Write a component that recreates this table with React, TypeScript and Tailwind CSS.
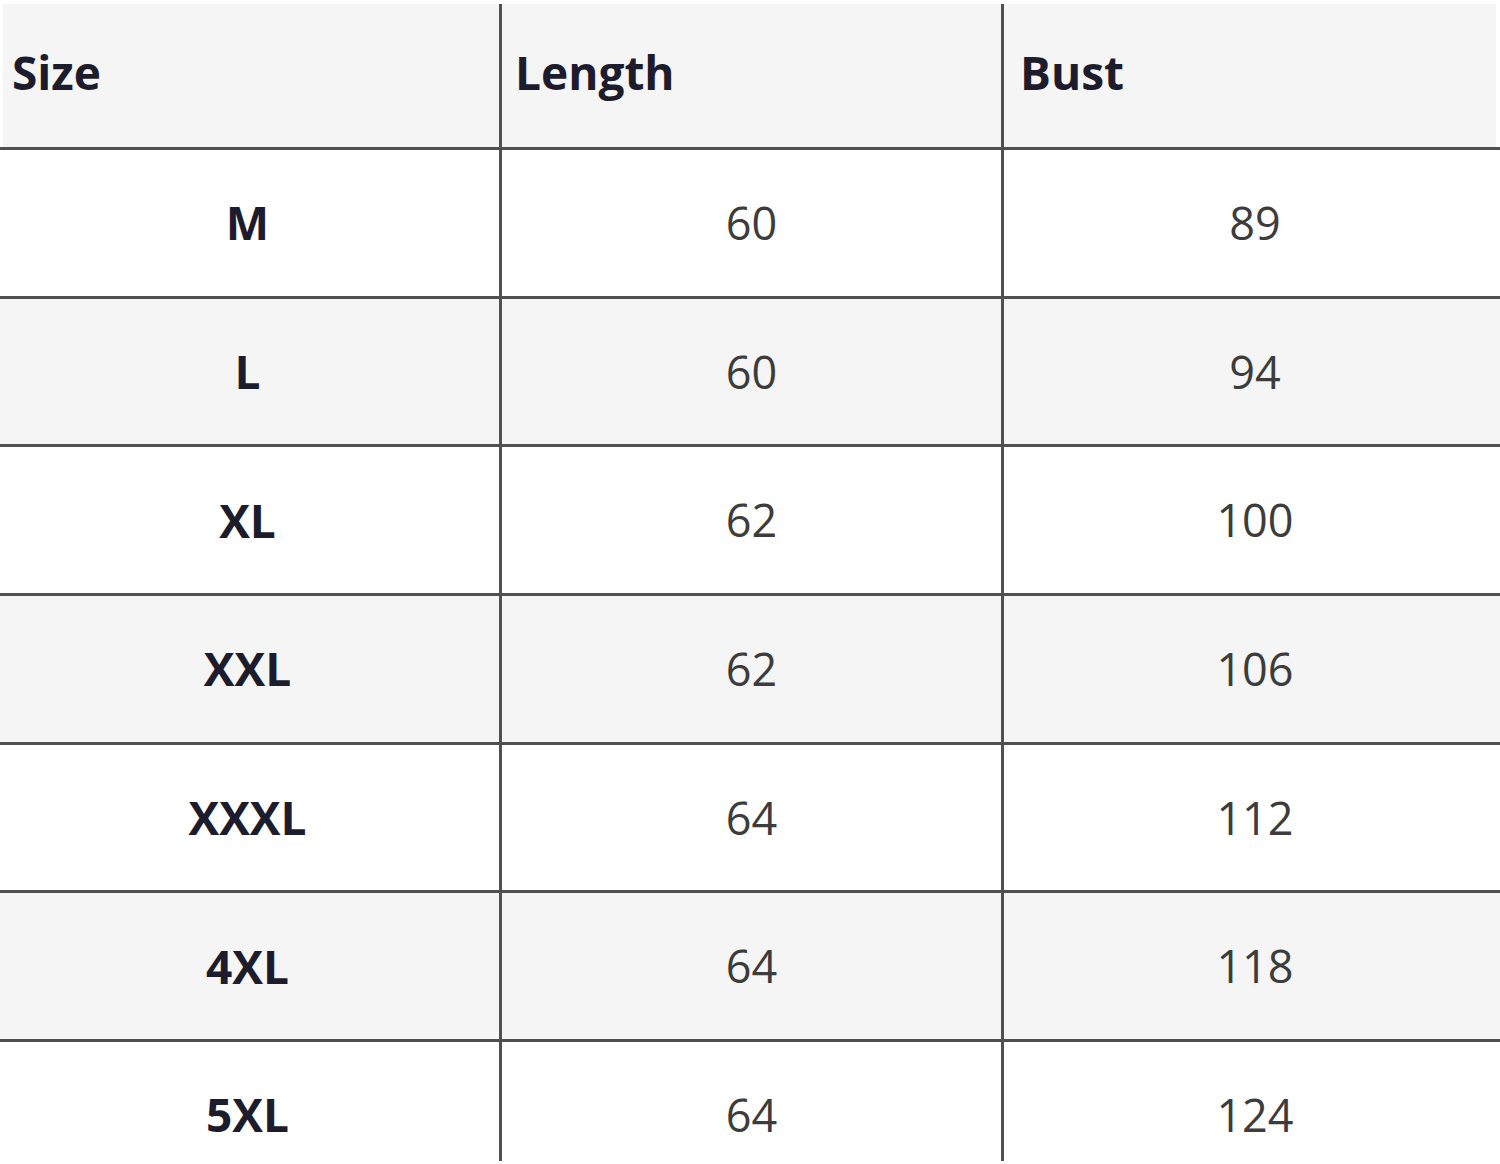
import React from "react";

const rows: [string, string, string][] = [
  ["M", "60", "89"],
  ["L", "60", "94"],
  ["XL", "62", "100"],
  ["XXL", "62", "106"],
  ["XXXL", "64", "112"],
  ["4XL", "64", "118"],
  ["5XL", "64", "124"],
];

const font = { fontFamily: '"Open Sans", "Noto Sans", sans-serif' };

export default function App() {
  return (
    <div className="w-[1500px] h-[1164px] bg-white overflow-hidden" style={font}>
      {/* header */}
      <div className="flex h-[150px] pt-[4px] border-b-[3px] border-[#505050]">
        <div className="w-[502px] pl-[3px] border-r-[3px] border-[#505050] flex">
          <div className="flex-1 bg-[#f5f5f5] flex items-center pl-[9px] pb-[6px] text-[46px] font-bold text-[#1c1c2c]">
            Size
          </div>
        </div>
        <div className="w-[502px] border-r-[3px] border-[#505050] flex">
          <div className="flex-1 bg-[#f5f5f5] flex items-center pl-[13px] pb-[6px] text-[46px] font-bold text-[#1c1c2c]">
            Length
          </div>
        </div>
        <div className="w-[496px] pr-[4px] flex">
          <div className="flex-1 bg-[#f5f5f5] flex items-center pl-[16px] pb-[6px] text-[46px] font-bold text-[#1c1c2c]">
            Bust
          </div>
        </div>
      </div>
      {rows.map((r, i) => {
        const last = i === rows.length - 1;
        const bg = i % 2 === 1 ? "bg-[#f5f5f5]" : "bg-white";
        return (
          <div
            key={r[0]}
            className={
              last
                ? "flex h-[119px]"
                : "flex h-[148.67px] border-b-[3px] border-[#505050]"
            }
          >
            <div className={`w-[502px] border-r-[3px] border-[#505050] flex items-start ${bg} text-[46px] font-bold text-[#1c1c2c]`}>
              <div className="w-full h-[145.67px] flex items-center justify-center pr-[4px]">{r[0]}</div>
            </div>
            <div className={`w-[502px] border-r-[3px] border-[#505050] flex items-start ${bg} text-[45px] text-[#3c3c3c]`}>
              <div className="w-full h-[145.67px] flex items-center justify-center">{r[1]}</div>
            </div>
            <div className={`w-[496px] flex items-start ${bg} text-[45px] text-[#3c3c3c]`}>
              <div className="w-full h-[145.67px] flex items-center justify-center pl-[6px]">{r[2]}</div>
            </div>
          </div>
        );
      })}
    </div>
  );
}
